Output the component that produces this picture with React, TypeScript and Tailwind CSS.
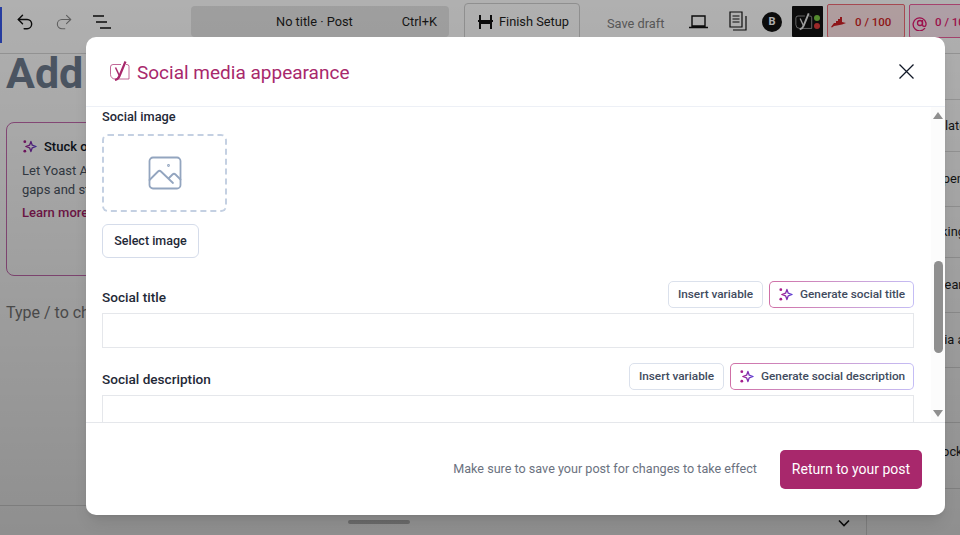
import { Undo2 } from "lucide-react";

const Sparkle = ({ size = 16 }: { size?: number }) => (
  <svg width={size} height={size} viewBox="0 0 16 16" fill="none" className="shrink-0">
    <defs>
      <linearGradient id="spark" x1="0" y1="0" x2="1" y2="0">
        <stop offset="0" stopColor="#a61e8c" />
        <stop offset="1" stopColor="#5b3fd6" />
      </linearGradient>
    </defs>
    <path d="M9.500 2.500 L10.900 6.600 L15 8 L10.900 9.400 L9.500 13.500 L8.100 9.400 L4 8 L8.100 6.600 Z" stroke="url(#spark)" strokeWidth="1.400" strokeLinejoin="round" />
    <circle cx="3" cy="2.800" r="1.500" fill="#a61e8c" />
    <circle cx="3" cy="13" r="1.500" fill="#a61e8c" />
  </svg>
);

const YoastMark = ({ color, className }: { color: string; className?: string }) => (
  <svg width="20" height="21" viewBox="0 0 20 21" fill="none" className={className}>
    <path d="M3 3.500h8M16 3.500h1a2 2 0 0 1 2 2v12.500H5a4.500 4.500 0 0 1-4.500-4.500V6A2.500 2.500 0 0 1 3 3.500" stroke={color} strokeWidth="1" opacity=".7" />
    <path d="M5.500 6.500 9.500 15" stroke={color} strokeWidth="1.500" />
    <path d="M15.500 .5 9.500 15 C8.500 17.500 7.500 18.500 5 19" stroke={color} strokeWidth="2.200" />
  </svg>
);

const GradientButton = ({ label, width }: { label: string; width: string }) => (
  <div className={`h-[27px] ${width} rounded-[5px] bg-gradient-to-r from-[#cf6fa6] to-[#c4bdf5] p-px`}>
    <div className="flex h-full w-full items-center gap-[7px] rounded-[4px] bg-white pl-[8px] text-[11.800px] font-medium text-[#414b5e]">
      <Sparkle size={15} />
      <span className="whitespace-nowrap">{label}</span>
    </div>
  </div>
);

const OutlineButton = ({ label }: { label: string }) => (
  <div className="flex h-[27px] w-[95px] items-center justify-center rounded-[5px] border border-[#dbe1ec] bg-white text-[11.800px] font-medium whitespace-nowrap text-[#414b5e]">
    {label}
  </div>
);

const SideRow = ({ label, indent, height }: { label: string; indent: string; height: string }) => (
  <div className={`flex ${height} items-center border-b border-[#dcdcdc] ${indent}`}>{label}</div>
);

const Background = () => (
  <div className="flex h-[535px] w-[960px] flex-col overflow-hidden bg-white text-[#1e1e1e]">
    <div className="flex h-[54px] shrink-0 items-start border-b border-[#d8d8d8]">
      <div className="mt-[7px] h-[36px] w-[2px] shrink-0 bg-[#3858e9]" />
      <div className="mt-[12px] ml-[13px] flex w-[176px] shrink-0 items-center gap-[19px]">
        <Undo2 size={20} strokeWidth={1.7} className="text-[#111]" />
        <Undo2 size={20} strokeWidth={1.3} className="-scale-x-100 text-[#8a8a8a]" />
        <svg width="18" height="14" viewBox="0 0 18 14" stroke="#111" strokeWidth="1.500"><path d="M0 1h11M3 7h11M7 13h11" /></svg>
      </div>
      <div className="mt-[6px] flex h-[31px] w-[258px] shrink-0 items-center rounded-[4px] bg-[#e6e6e6] pr-[12px] text-[12.800px]">
        <span className="ml-[85px]">No title · Post</span>
        <span className="ml-auto">Ctrl+K</span>
      </div>
      <div className="mt-[3px] ml-[15px] flex h-[36px] w-[116px] shrink-0 items-center gap-[6px] rounded-t-[4px] border border-[#d0d0d0] pt-[2px] pl-[13px] text-[12.800px]">
        <svg width="15" height="14" viewBox="0 0 15 14" fill="none" stroke="#111" strokeWidth="2.400"><path d="M2 0v5.500M13 0v5.500M2 8.500V14M13 8.500V14M0 6h15M1 8h13" strokeWidth="2" /></svg>
        <span className="whitespace-nowrap">Finish Setup</span>
      </div>
      <span className="mt-[14px] ml-[27px] w-[56px] shrink-0 text-[12.800px] whitespace-nowrap text-[#808080]">Save draft</span>
      <svg className="mt-[15px] ml-[26px] shrink-0" width="19" height="14" viewBox="0 0 19 14" fill="none" stroke="#111" strokeWidth="1.400"><path d="M3 1h13v10H3zM0 12.500h19" /></svg>
      <svg className="mt-[11px] ml-[21px] shrink-0" width="18" height="20" viewBox="0 0 18 20" fill="none" stroke="#111" strokeWidth="1.200"><path d="M1 1h12v15H1zM3.500 5h7M3.500 8h7M3.500 11h7M4 19h13V5" /></svg>
      <div className="mt-[12px] ml-[15px] flex h-[20px] w-[20px] shrink-0 items-center justify-center rounded-full bg-[#111] text-[11px] font-bold text-white">B</div>
      <div className="mt-[6px] ml-[10px] flex h-[31px] w-[31px] shrink-0 items-center gap-[1px] rounded-[1px] bg-[#111] pl-[3px]">
        <YoastMark color="#e8e8e8" className="h-[18px] w-[18px]" />
        <div className="flex flex-col gap-[2px]">
          <div className="h-[6px] w-[6px] rounded-full bg-[#7ac943]" />
          <div className="h-[6px] w-[6px] rounded-full bg-[#e33b3b]" />
        </div>
      </div>
      <div className="mt-[4px] ml-[4px] flex h-[34px] w-[78px] shrink-0 items-center gap-[9px] rounded-[2px] border border-[#f06a75] bg-[#ffe4e6] pt-[3px] pl-[3px] text-[11.500px] font-medium text-[#d01f25]">
        <svg width="15" height="12" viewBox="0 0 15 12" fill="#d01f25"><path d="M0 10 3 6h2V4h2V2h2V0h2v5l4 1-4 1.500-5 1-3 .5-2 1.500z" /></svg>
        <span className="whitespace-nowrap">0 / 100</span>
      </div>
      <div className="mt-[4px] ml-[4px] flex h-[34px] w-[78px] shrink-0 items-center gap-[8px] rounded-[2px] border border-[#f0609e] bg-[#fde7f1] pt-[3px] pl-[2px] text-[11.500px] font-medium text-[#e3176f]">
        <svg width="15" height="16" viewBox="0 0 15 16" fill="none" stroke="#e3176f" strokeWidth="1.300"><path d="M13 13a6.500 6.500 0 1 1 1-5v2" /><circle cx="8" cy="8" r="2.500" /><path d="M10.500 5v5a1.800 1.800 0 0 0 3.500 0" /></svg>
        <span className="whitespace-nowrap">0 / 100</span>
      </div>
    </div>
    <div className="flex min-h-0 flex-1">
      <div className="flex w-[866px] shrink-0 flex-col">
        <div className="flex-1 pl-[6px]">
          <div className="mt-[-6px] text-[43px] leading-[50px] font-bold text-[#6f7d90]">Add title</div>
          <div className="mt-[24px] h-[154px] w-[500px] rounded-[8px] border border-[#c66bb0] px-[15px] pt-[14px]">
            <div className="flex items-center gap-[7px] text-[13px] font-medium text-[#111827]">
              <Sparkle size={15} />
              <span>Stuck on what to write?</span>
            </div>
            <p className="mt-[4px] text-[13px] leading-[19px] text-[#4b5563]">Let Yoast AI help you fill in the<br />gaps and start your post</p>
            <p className="mt-[4px] text-[13px] font-medium text-[#a61e69]">Learn more</p>
          </div>
          <p className="mt-[25px] text-[16px] text-[#777]">Type / to choose a block</p>
        </div>
        <div className="relative h-[30px] border-t border-[#dcdcdc]">
          <div className="absolute top-[14px] left-[348px] h-[4px] w-[62px] rounded-full bg-[#bbb]" />
          <svg className="absolute top-[13px] left-[838px]" width="12" height="8" viewBox="0 0 12 8" fill="none" stroke="#111" strokeWidth="1.600"><path d="m1 1.500 5 5 5-5" /></svg>
        </div>
      </div>
      <div className="flex flex-1 flex-col items-stretch border-l border-[#dcdcdc] pt-[45px] text-[12.800px] whitespace-nowrap text-[#1e1e1e]">
        <div className="border-t border-[#dcdcdc]" />
        <SideRow label="Translate" indent="pl-[46px]" height="h-[52px]" />
        <SideRow label="Open" indent="pl-[67px]" height="h-[55px]" />
        <SideRow label="Linking" indent="pl-[57px]" height="h-[51px]" />
        <SideRow label="Search" indent="pl-[70px]" height="h-[55px]" />
        <SideRow label="Media a" indent="pl-[52px]" height="h-[55px]" />
        <SideRow label="" indent="" height="h-[55px]" />
        <SideRow label="Block" indent="pl-[64px] pb-[7px]" height="h-[66px]" />
      </div>
    </div>
  </div>
);

export default function App() {
  return (
    <div className="relative h-[535px] w-[960px] overflow-hidden font-['Roboto',sans-serif]">
      <Background />
      <div className="absolute inset-0 bg-gradient-to-b from-[#000]/31 to-[#000]/44" />
      <div className="absolute top-[37px] left-[86px] flex h-[478px] w-[859px] flex-col overflow-hidden rounded-[10px] bg-white shadow-lg">
        <div className="flex h-[70px] shrink-0 items-center justify-between border-b border-[#edf0f6] pr-[31px] pl-[24px]">
          <div className="flex items-center gap-[7px]">
            <YoastMark color="#a8286c" />
            <span className="mt-[4px] text-[19px] text-[#a8286c]">Social media appearance</span>
          </div>
          <svg width="15" height="15" viewBox="0 0 15 15" stroke="#111827" strokeWidth="1.300"><path d="m.5.5 14 14M14.500.5l-14 14" /></svg>
        </div>
        <div className="flex min-h-0 flex-1">
          <div className="min-w-0 flex-1 overflow-hidden pr-[17px] pl-[16px]">
            <p className="text-[12.800px] leading-[20px] font-medium text-[#1f2937]">Social image</p>
            <div className="mt-[7px] flex h-[78px] w-[125px] items-center justify-center rounded-[6px] border-2 border-dashed border-[#c4d0e2]">
              <svg width="34" height="34" viewBox="0 0 34 34" fill="none" stroke="#93a5bf" strokeWidth="1.800" strokeLinecap="round">
                <rect x="1.500" y="1.500" width="31" height="31" rx="3.500" />
                <path d="M1.500 24 10 15.500c1-1 2-1 3 0L25 27M21 22l3.500-3.500c1-1 2-1 3 0l5 5" />
                <circle cx="20.500" cy="9.500" r=".5" />
              </svg>
            </div>
            <div className="mt-[12px] flex h-[34px] w-[97px] items-center justify-center rounded-[6px] border border-[#d5dcea] pt-[1px] text-[12.500px] font-medium text-[#1f2937]">
              Select image
            </div>
            <div className="mt-[23px] flex h-[32px] items-center justify-between">
              <span className="text-[13.600px] leading-[20px] font-medium text-[#1f2937]">Social title</span>
              <div className="flex gap-[6px] self-start">
                <OutlineButton label="Insert variable" />
                <GradientButton label="Generate social title" width="w-[145px]" />
              </div>
            </div>
            <div className="h-[35px] border border-[#e5e7eb]" />
            <div className="mt-[15px] flex h-[32px] items-center justify-between">
              <span className="text-[13.600px] leading-[20px] font-medium text-[#1f2937]">Social description</span>
              <div className="flex gap-[6px] self-start">
                <OutlineButton label="Insert variable" />
                <GradientButton label="Generate social description" width="w-[184px]" />
              </div>
            </div>
            <div className="h-[60px] border border-[#e5e7eb]" />
          </div>
          <div className="flex w-[14px] shrink-0 flex-col items-center justify-between bg-[#fcfcfc] py-[5px]">
            <div className="h-0 w-0 border-x-[5px] border-b-[7px] border-x-transparent border-b-[#8f8f8f]" />
            <div className="h-[92px] w-[9px] translate-y-[42px] rounded-full bg-[#8f8f8f]" />
            <div className="h-0 w-0 border-x-[5px] border-t-[7px] border-x-transparent border-t-[#8f8f8f]" />
          </div>
        </div>
        <div className="flex h-[93px] shrink-0 items-center justify-end gap-[23px] border-t border-[#e5e7eb] pr-[23px]">
          <span className="mt-[1px] text-[12.600px] text-[#6b7280]">Make sure to save your post for changes to take effect</span>
          <div className="flex h-[39px] w-[142px] items-center justify-center rounded-[5px] bg-[#a8286c] pt-[1px] text-[14px] text-white">
            Return to your post
          </div>
        </div>
      </div>
    </div>
  );
}
